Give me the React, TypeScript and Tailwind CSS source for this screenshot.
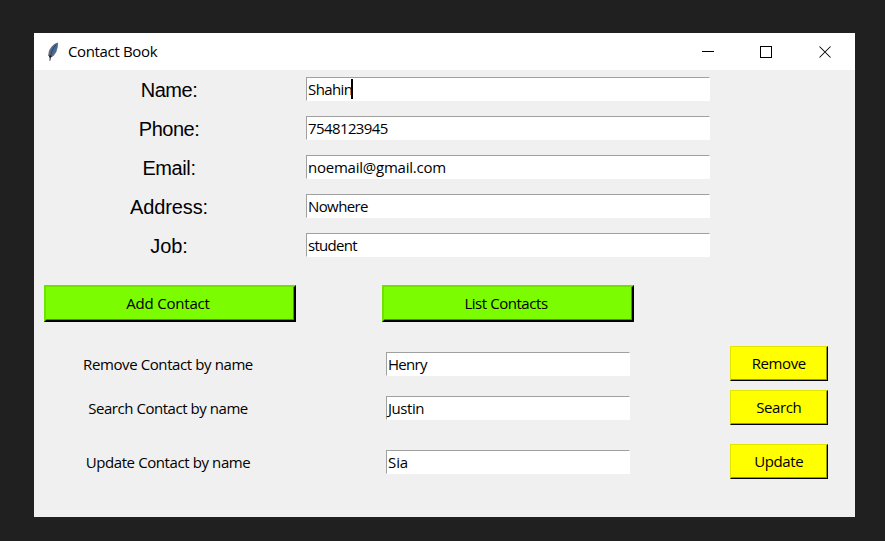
import React from "react";

const ui = "font-['Open_Sans','Noto_Sans',sans-serif] text-[15px] leading-[20px] whitespace-pre text-black";

function Entry({ value, track, width, caret }: { value: string; track: string; width: string; caret?: boolean }) {
  return (
    <div className={`${width} flex h-[24px] shrink-0 items-center border border-t-[#a0a0a0] border-l-[#a0a0a0] border-r-white border-b-white bg-white pl-px`}>
      <span className={`${ui} ${track}`}>{value}</span>
      {caret && <span className="-ml-px h-[20px] w-[2px] bg-black" />}
    </div>
  );
}

function GreenButton({ label, track, margin }: { label: string; track: string; margin: string }) {
  return (
    <div className={`${margin} h-[37px] w-[252px] shrink-0 border-2 border-t-[#6fe300] border-l-[#6fe300] border-r-black border-b-black`}>
      <div className="flex h-full items-center justify-center border-r border-b border-[#4a9900] bg-[#7cfc00] pr-[3px]">
        <span className={`${ui} ${track}`}>{label}</span>
      </div>
    </div>
  );
}

function YellowButton({ label, track }: { label: string; track: string }) {
  return (
    <div className="ml-[100px] h-[35px] w-[98px] shrink-0 border border-t-[#e3e300] border-l-[#e3e300] border-r-black border-b-black">
      <div className="flex h-full items-center justify-center border-r border-b border-[#999900] bg-[#ffff00] pl-[0.5px]">
        <span className={`${ui} ${track}`}>{label}</span>
      </div>
    </div>
  );
}

const fields = [
  { label: "Name:", labelTrack: "tracking-[-0.5px]", value: "Shahin", track: "tracking-[-0.6px]" },
  { label: "Phone:", labelTrack: "tracking-[-0.5px]", value: "7548123945", track: "tracking-[-0.6px]" },
  { label: "Email:", labelTrack: "tracking-[-0.4px]", value: "noemail@gmail.com", track: "tracking-[-0.23px]" },
  { label: "Address:", labelTrack: "tracking-[-0.1px]", value: "Nowhere", track: "tracking-[-0.6px]" },
  { label: "Job:", labelTrack: "tracking-[-0.1px]", value: "student", track: "tracking-[-0.7px]" },
];

const actions = [
  { label: "Remove Contact by name", labelTrack: "tracking-[-0.4px]", value: "Henry", track: "tracking-[-0.7px]", button: "Remove", buttonTrack: "tracking-[-0.4px]", gap: "mt-[24px]" },
  { label: "Search Contact by name", labelTrack: "tracking-[-0.45px]", value: "Justin", track: "tracking-[-0.45px]", button: "Search", buttonTrack: "tracking-[-0.45px]", gap: "mt-[9px]" },
  { label: "Update Contact by name", labelTrack: "tracking-[-0.4px]", value: "Sia", track: "tracking-[-0.1px]", button: "Update", buttonTrack: "tracking-[-0.4px]", gap: "mt-[19px]" },
];

function Feather() {
  return (
    <svg className="ml-[13px] h-[20px] w-[12px]" viewBox="0 0 12 20">
      <path d="M11 0.5C7.5 1.2 3.8 4.7 1.9 9L1.2 13.2L2.6 15L2.8 19.2L4 15.4L6.7 13.8L9.3 10L10.8 5Z" fill="#666c73" />
      <path d="M10.4 1.3C7.6 2.5 5.3 5.3 3.8 9.5L3.2 13L5.2 12.5L8.3 9.2L10 4.8Z" fill="#3b6ca6" />
      <path d="M9.3 2.5C6.2 5.8 4.2 9.5 3.4 15L2.9 18.8" fill="none" stroke="#26374c" strokeWidth="0.7" />
      <path d="M1.4 13.3L5 14.1L3 15.9Z" fill="#151b20" />
    </svg>
  );
}

export default function App() {
  return (
    <div className="h-[541px] w-[885px] overflow-hidden bg-[#202020] pt-[33px] pl-[34px]">
      <div className="flex h-[484px] w-[821px] flex-col bg-[#f0f0f0]">
        <div className="flex h-[37px] shrink-0 items-center bg-white">
          <Feather />
          <span className={`${ui} ml-[9px] flex-1 pb-[2px] tracking-[-0.35px]`}>Contact Book</span>
          <svg className="mr-[23px] h-[12px] w-[130px]" viewBox="0 0 130 12" fill="none" stroke="#000" shapeRendering="crispEdges">
            <path d="M0 5.5H12" />
            <path d="M58.5 0.5H69.5V11.5H58.5Z" />
            <path d="M117.5 0.5L128.5 11.5M128.5 0.5L117.5 11.5" shapeRendering="auto" strokeWidth="1.05" />
          </svg>
        </div>

        <div className="flex flex-col gap-[15px] pt-[7px]">
          {fields.map((f, i) => (
            <div key={f.label} className="flex h-[24px] items-center">
              <div className={`w-[270px] shrink-0 pt-[2px] text-center font-['Liberation_Sans',Arial,sans-serif] text-[20px] leading-[24px] text-black ${f.labelTrack}`}>{f.label}</div>
              <div className="ml-[2px]">
                <Entry value={f.value} track={f.track} width="w-[404px]" caret={i === 0} />
              </div>
            </div>
          ))}
        </div>

        <div className="mt-[28px] flex">
          <GreenButton label="Add Contact" track="tracking-[-0.2px]" margin="ml-[10px]" />
          <GreenButton label="List Contacts" track="tracking-[-0.45px]" margin="ml-[86px]" />
        </div>

        {actions.map((a) => (
          <div key={a.button} className={`${a.gap} flex h-[35px] shrink-0 items-center`}>
            <div className={`${ui} ${a.labelTrack} w-[268px] shrink-0 text-center`}>{a.label}</div>
            <div className="ml-[84px] pt-px">
              <Entry value={a.value} track={a.track} width="w-[244px]" />
            </div>
            <YellowButton label={a.button} track={a.buttonTrack} />
          </div>
        ))}
      </div>
    </div>
  );
}
